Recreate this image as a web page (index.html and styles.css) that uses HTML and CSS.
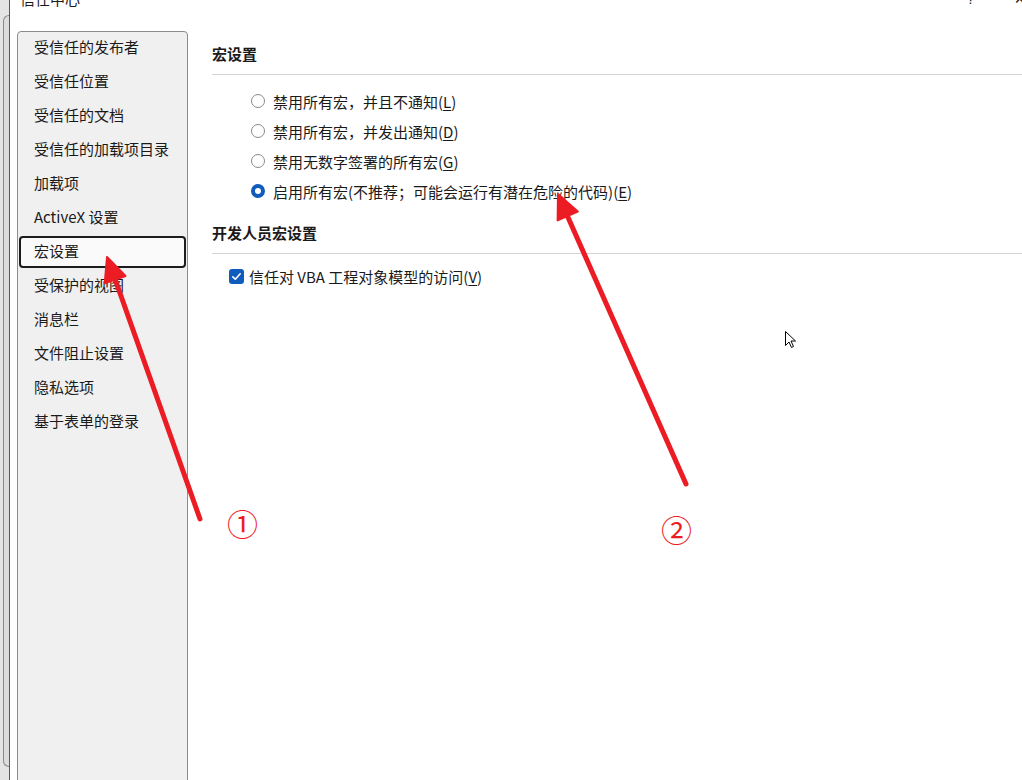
FILE: index.html
```html
<!DOCTYPE html>
<html lang="zh-CN">
  <head>
    <meta charset="UTF-8" />
    <meta name="viewport" content="width=device-width, initial-scale=1.0" />
    <title>信任中心</title>
    <link rel="stylesheet" href="styles.css">
  </head>
  <body>
    <div class="desk">
      <div class="behind">
        <div class="behind-frame"></div>
      </div>
      <div class="dialog">
        <div class="titlebar">
          <span class="title">信任中心</span>
          <span class="help">?</span>
          <span class="close">×</span>
        </div>
        <div class="main">
          <ul class="nav">
            <li>受信任的发布者</li>
            <li>受信任位置</li>
            <li>受信任的文档</li>
            <li>受信任的加载项目录</li>
            <li>加载项</li>
            <li>ActiveX 设置</li>
            <li class="active">宏设置</li>
            <li>受保护的视图</li>
            <li>消息栏</li>
            <li>文件阻止设置</li>
            <li>隐私选项</li>
            <li>基于表单的登录</li>
          </ul>
          <div class="content">
            <h2 class="section-title">宏设置</h2>
            <div class="options">
              <label class="option"><span class="radio"></span>禁用所有宏，并且不通知(<u>L</u>)</label>
              <label class="option"><span class="radio"></span>禁用所有宏，并发出通知(<u>D</u>)</label>
              <label class="option"><span class="radio"></span>禁用无数字签署的所有宏(<u>G</u>)</label>
              <label class="option"><span class="radio checked"></span>启用所有宏(不推荐；可能会运行有潜在危险的代码)(<u>E</u>)</label>
            </div>
            <h2 class="section-title second">开发人员宏设置</h2>
            <div class="checks">
              <label class="option">
                <span class="checkbox">
                  <svg width="11" height="11" viewBox="0 0 11 11"><path d="M1.8 5.8 L4.3 8.2 L9.2 2.8" fill="none" stroke="#ffffff" stroke-width="1.6" stroke-linecap="round" stroke-linejoin="round"/></svg>
                </span>信任对 VBA 工程对象模型的访问(<u>V</u>)
              </label>
            </div>
          </div>
        </div>
      </div>
    </div>

    <!-- annotations drawn over the screenshot -->
    <svg class="marks" width="1022" height="780" viewBox="0 0 1022 780">
      <g stroke="#ec1c24" stroke-width="5" stroke-linecap="round" fill="#ec1c24">
        <line x1="200" y1="519" x2="115" y2="279" />
        <polygon points="107,257 125.5,276 104.7,283.3" stroke-width="2" stroke-linejoin="round" />
        <line x1="686" y1="484" x2="567" y2="215" />
        <polygon points="558,194 577.8,211.6 557.6,220.4" stroke-width="2" stroke-linejoin="round" />
      </g>
      <path class="cursor" d="M785.5 331.5 L785.5 345.5 L789 342 L791.5 347.5 L793.5 346.5 L791 341 L795.5 341 Z" fill="#ffffff" stroke="#000000" stroke-width="1" stroke-linejoin="round" />
    </svg>
    <span class="num one">①</span>
    <span class="num two">②</span>
  </body>
</html>
```

FILE: styles.css
```css
html,
body {
  margin: 0;
  padding: 0;
  height: 780px;
  overflow: hidden;
}
body {
  font-family: "Noto Sans CJK SC", "Noto Sans", sans-serif;
  font-size: 15px;
  color: #1a1a1a;
  background-color: #ffffff;
  position: relative;
}
.desk {
  display: flex;
  height: 780px;
}
.behind {
  width: 9px;
  flex: none;
  background-color: #e4e4e4;
}
.behind-frame {
  margin: 15px 0 0 3px;
  height: 750px;
  border: 1px solid #8a8a8a;
  border-right: none;
  border-radius: 6px 0 0 6px;
  background-color: #dcdcdc;
}
.dialog {
  flex: 1;
  display: flex;
  flex-direction: column;
  border-left: 1px solid #2b5fb3;
  background-color: #ffffff;
}
.titlebar {
  height: 31px;
  flex: none;
  display: flex;
  align-items: flex-start;
  padding-left: 10px;
}
.title {
  margin-top: -11px;
  line-height: 20px;
  flex: 1;
}
.help,
.close {
  margin-top: -11px;
  line-height: 20px;
  font-family: "Liberation Sans", sans-serif;
  font-size: 14px;
}
.help {
  margin-right: 40px;
}
.close {
  margin-right: -3px;
  font-size: 18px;
}
.main {
  display: flex;
  flex: 1;
}
.nav {
  list-style: none;
  margin: 0 0 0 7px;
  padding: 0 1px;
  width: 171px;
  height: 760px;
  box-sizing: border-box;
  flex: none;
  background-color: #f0f0f0;
  border: 1px solid #8c8c8c;
  border-radius: 4px;
}
.nav li {
  height: 32px;
  line-height: 26px;
  padding-bottom: 2px;
  margin-bottom: 2px;
  padding-left: 13px;
  border: 2px solid transparent;
  border-radius: 4px;
  box-sizing: border-box;
  white-space: nowrap;
}
.nav li.active {
  border-color: #1c1c1c;
  background-color: #fafafa;
}
.content {
  flex: 1;
  margin-left: 24px;
}
.section-title {
  margin: 13px 0 0;
  padding-bottom: 10px;
  font-size: 15px;
  line-height: 20px;
  font-weight: bold;
  border-bottom: 1px solid #d4d4d4;
}
.section-title.second {
  margin-top: 17px;
}
.options {
  margin-top: 11px;
  padding-left: 39px;
}
.checks {
  margin-top: 7px;
  padding-left: 17px;
}
.option {
  display: flex;
  align-items: center;
  height: 30px;
  white-space: nowrap;
}
.option u {
  text-underline-offset: 2px;
}
.radio {
  width: 14px;
  height: 14px;
  box-sizing: border-box;
  border: 1px solid #8a8a8a;
  border-radius: 50%;
  background-color: #ffffff;
  margin-right: 8px;
  flex: none;
}
.radio.checked {
  border: 4px solid #0f5cbd;
}
.checkbox {
  width: 15px;
  height: 15px;
  border-radius: 3px;
  background-color: #0f5cbd;
  margin-right: 5px;
  display: flex;
  align-items: center;
  justify-content: center;
  flex: none;
}
.marks {
  position: absolute;
  top: 0;
  left: 0;
  pointer-events: none;
}
.num {
  position: absolute;
  color: #ec1c24;
  font-size: 31px;
  line-height: 32px;
}
.num.one {
  left: 227px;
  top: 507px;
}
.num.two {
  left: 661px;
  top: 513px;
}
```
